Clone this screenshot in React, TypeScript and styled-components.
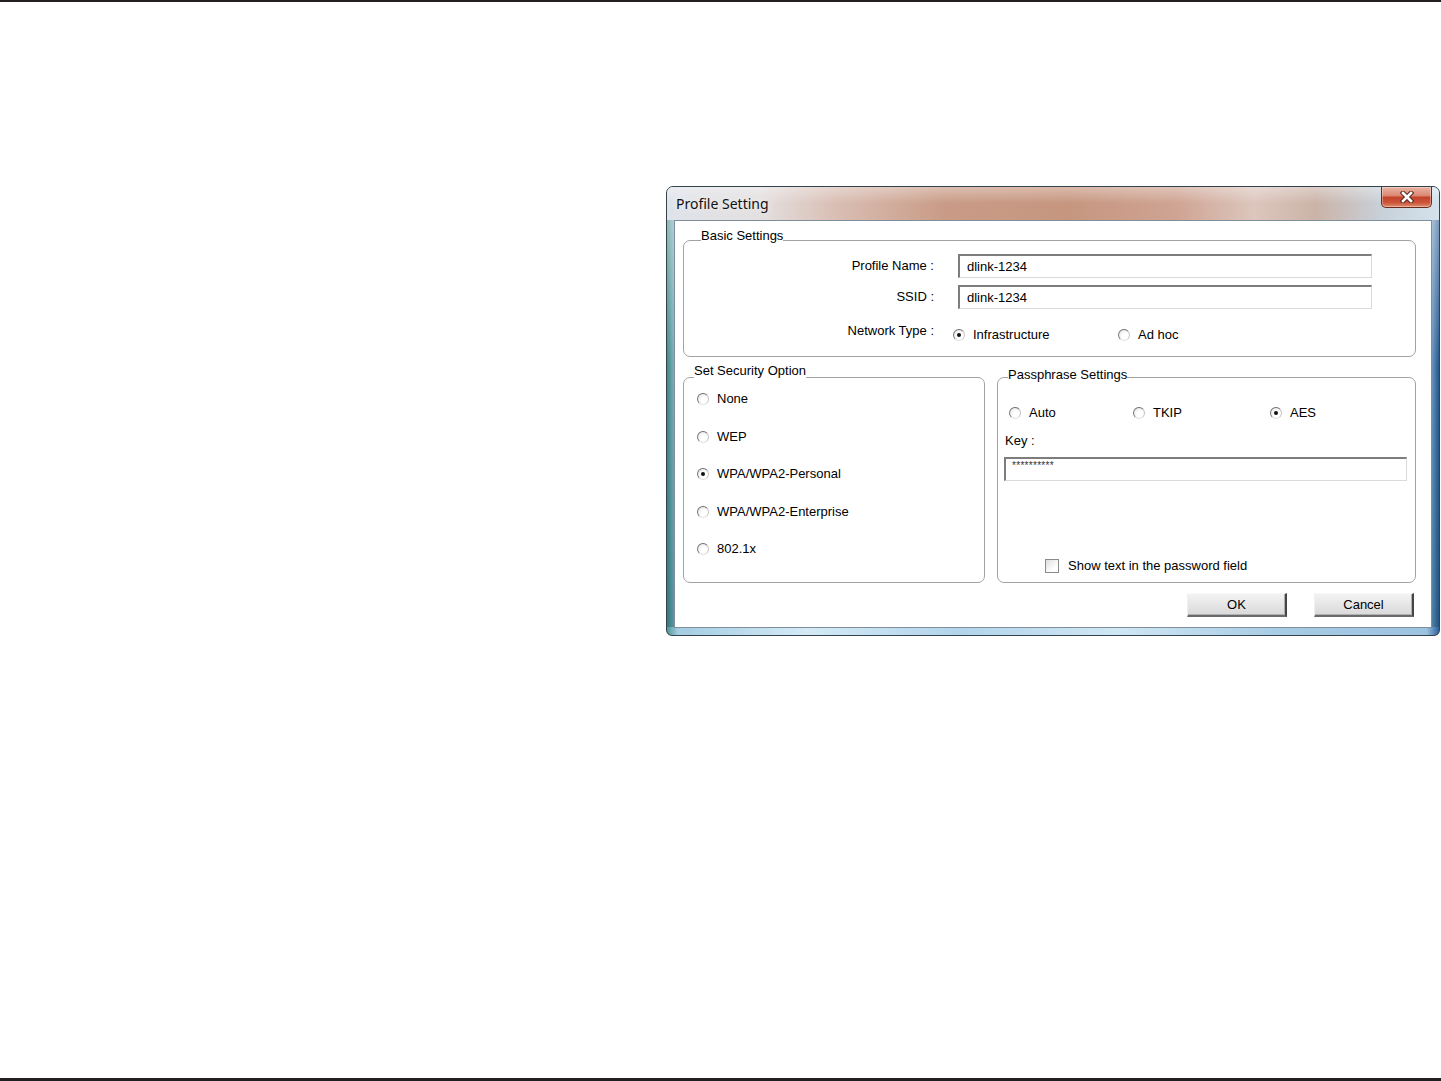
import { createGlobalStyle, styled } from "styled-components";

const GlobalStyle = createGlobalStyle`
  html, body {
    margin: 0;
    padding: 0;
    background: #fff;
  }
  body {
    font-family: "Liberation Sans", Arial, sans-serif;
    color: #000;
  }
`;

const Page = styled.div`
  box-sizing: border-box;
  width: 1441px;
  height: 1081px;
  border-top: 2px solid #231f20;
  border-bottom: 3px solid #231f20;
  padding: 184px 0 0 666px;
  background: #fff;
`;

const Window = styled.div`
  box-sizing: border-box;
  width: 774px;
  height: 450px;
  display: flex;
  flex-direction: column;
  border: 1px solid #34424c;
  border-radius: 7px 7px 6px 6px;
  overflow: hidden;
  background:
    linear-gradient(90deg, #4f9894 0%, #a3cde2 1.4%, #d4eaf6 18%, #b2d4ea 38%, #d0e7f4 58%, #a6cbe4 80%, #9cc3e0 98.4%, #2c5f9c 100%)
      bottom / 100% 8px no-repeat,
    linear-gradient(180deg, rgba(255, 255, 255, 0.5) 0%, rgba(255, 255, 255, 0) 40%, rgba(20, 80, 100, 0.3) 100%),
    linear-gradient(90deg, #3f8a86 0%, #8fbccb 1.2%, #bcd9e8 30%, #c9e2ef 55%, #90b8d8 98.6%, #24558e 100%);
`;

const TitleBar = styled.div`
  height: 33px;
  flex: none;
  display: flex;
  align-items: center;
  justify-content: space-between;
  padding-left: 9px;
  background:
    linear-gradient(180deg, rgba(255, 255, 255, 0.35) 0%, rgba(255, 255, 255, 0) 50%),
    linear-gradient(
      90deg,
      #dfe3ea 0%,
      #e4e0e0 12%,
      #d9beb3 22%,
      #c99b86 36%,
      #c6967f 52%,
      #cfa493 66%,
      #dcc6bd 76%,
      #cbb3a8 84%,
      #c8d2db 93%,
      #d4e2ec 100%
    );
`;

const Title = styled.span`
  font-family: "Noto Sans", "Liberation Sans", sans-serif;
  font-size: 14px;
  line-height: 20px;
  color: #111;
  text-shadow: 0 0 6px rgba(255, 255, 255, 0.95);
`;

const CloseButton = styled.button`
  align-self: flex-start;
  box-sizing: border-box;
  width: 51px;
  height: 21px;
  margin: 0 7px 0 0;
  padding: 0;
  display: flex;
  align-items: center;
  justify-content: center;
  border: 1px solid #6a2a1e;
  border-top: none;
  border-radius: 0 0 5px 5px;
  background: linear-gradient(180deg, #eab3a3 0%, #dc8a74 42%, #c4432b 52%, #cc553b 78%, #e08d6c 100%);
  box-shadow: inset 0 0 0 1px rgba(255, 255, 255, 0.35);
`;

const Client = styled.div`
  flex: 1;
  display: flex;
  flex-direction: column;
  margin: 0 7px 7px;
  padding: 5px 15px 10px 8px;
  border: 1px solid #7f8e9c;
  background: #fff;
  font-size: 13px;
`;

const Group = styled.fieldset<{ $width?: number }>`
  margin: 0;
  padding: 0;
  min-width: 0;
  border: 1px solid #a2a2a2;
  border-radius: 7px;
  ${(p) => (p.$width ? `width: ${p.$width}px; flex: none;` : "flex: 1;")}
  box-sizing: border-box;
`;

const Caption = styled.legend<{ $inset: number; $offset: number }>`
  margin-left: ${(p) => p.$inset}px;
  padding: ${(p) => p.$offset}px 0 ${(p) => 12 - p.$offset}px;
  font-size: 13px;
  line-height: 16px;
`;

const BasicBody = styled.div`
  display: flex;
  flex-direction: column;
  gap: 7px;
  padding-bottom: 9px;
`;

const FieldRow = styled.div<{ $top?: boolean }>`
  display: flex;
  align-items: ${(p) => (p.$top ? "flex-start" : "center")};
  gap: 24px;
  height: 24px;
  margin-top: ${(p) => (p.$top ? 7 : 0)}px;
`;

const FieldLabel = styled.span`
  flex: none;
  width: 250px;
  text-align: right;
  line-height: 16px;
`;

const TextBox = styled.input<{ $width: number }>`
  box-sizing: border-box;
  width: ${(p) => p.$width}px;
  height: 24px;
  margin: 0;
  padding: 0 6px 0 7px;
  border-style: solid;
  border-width: 2px 1px 1px 2px;
  border-color: #7d7d7d #dadada #dadada #7d7d7d;
  background: #fff;
  font-family: "Liberation Sans", Arial, sans-serif;
  font-size: 13px;
  color: #000;
  outline: none;
`;

const KeyBox = styled(TextBox)`
  padding: 0 0 9px 6px;
  font-size: 10px;
  letter-spacing: 0.3px;
  color: #333;
`;

const OptionLine = styled.div<{ $columns: string; $shift?: number; $drop?: number }>`
  display: grid;
  grid-template-columns: ${(p) => p.$columns};
  align-items: center;
  margin-left: ${(p) => p.$shift ?? 0}px;
  padding-top: ${(p) => p.$drop ?? 0}px;
`;

const Option = styled.label`
  display: flex;
  align-items: center;
  gap: 8px;
  line-height: 16px;
  white-space: nowrap;
`;

const RadioMark = styled.span<{ $checked?: boolean }>`
  position: relative;
  flex: none;
  box-sizing: border-box;
  width: 12px;
  height: 12px;
  border-radius: 50%;
  border: 1px solid;
  border-color: #6e6e6e #c4c4c4 #e2e2e2 #7a7a7a;
  background: radial-gradient(circle at 65% 65%, #ffffff 35%, #dedede 100%);
  &::after {
    content: "";
    display: ${(p) => (p.$checked ? "block" : "none")};
    position: absolute;
    left: 3px;
    top: 3px;
    width: 4px;
    height: 4px;
    border-radius: 50%;
    background: #111;
  }
`;

const CheckMark = styled.span`
  flex: none;
  box-sizing: border-box;
  width: 14px;
  height: 14px;
  border: 1px solid #8a8a8a;
  background: linear-gradient(135deg, #dedede 0%, #ffffff 70%);
`;

const LowerRow = styled.div`
  display: flex;
  gap: 12px;
  margin-top: 6px;
`;

const SecurityList = styled.div`
  display: flex;
  flex-direction: column;
  gap: 21.5px;
  padding-left: 13px;
`;

const PassBody = styled.div`
  display: flex;
  flex-direction: column;
  padding: 14px 8px 8px 6px;
`;

const KeyLabel = styled.span`
  margin: 12px 0 8px 1px;
  line-height: 16px;
`;

const ShowText = styled(Option)`
  gap: 9px;
  margin: 77px 0 0 41px;
`;

const ButtonRow = styled.div`
  display: flex;
  justify-content: flex-end;
  gap: 27px;
  margin-top: 10px;
  padding-right: 2px;
`;

const PushButton = styled.button`
  box-sizing: border-box;
  width: 100px;
  height: 24px;
  padding: 0;
  border-style: solid;
  border-width: 1px 2px 2px 1px;
  border-color: #f8f8f8 #454545 #6a6a6a #f0f0f0;
  background: linear-gradient(180deg, #f3f3f3 0%, #e6e6e6 50%, #d9d9d9 100%);
  box-shadow: inset -1px -1px 0 #b0b0b0;
  font-family: "Liberation Sans", Arial, sans-serif;
  font-size: 13px;
  color: #000;
`;

const CloseIcon = () => (
  <svg width="16" height="12" viewBox="0 0 16 12">
    <path d="M4 2 L12 10 M12 2 L4 10" stroke="#5b2a22" strokeWidth="4.6" strokeLinecap="square" />
    <path d="M4 2 L12 10 M12 2 L4 10" stroke="#ffffff" strokeWidth="2.6" strokeLinecap="square" />
  </svg>
);

const Radio = ({ label, checked }: { label: string; checked?: boolean }) => (
  <Option>
    <RadioMark $checked={checked} />
    {label}
  </Option>
);

const securityOptions = ["None", "WEP", "WPA/WPA2-Personal", "WPA/WPA2-Enterprise", "802.1x"];

export default function App() {
  return (
    <Page>
      <GlobalStyle />
      <Window>
        <TitleBar>
          <Title>Profile Setting</Title>
          <CloseButton aria-label="Close">
            <CloseIcon />
          </CloseButton>
        </TitleBar>
        <Client>
          <Group>
            <Caption $inset={17} $offset={2}>Basic Settings</Caption>
            <BasicBody>
              <FieldRow>
                <FieldLabel>Profile Name :</FieldLabel>
                <TextBox $width={414} value="dlink-1234" readOnly />
              </FieldRow>
              <FieldRow>
                <FieldLabel>SSID :</FieldLabel>
                <TextBox $width={414} value="dlink-1234" readOnly />
              </FieldRow>
              <FieldRow $top>
                <FieldLabel>Network Type :</FieldLabel>
                <OptionLine $columns="165px auto" $shift={-5} $drop={4}>
                  <Radio label="Infrastructure" checked />
                  <Radio label="Ad hoc" />
                </OptionLine>
              </FieldRow>
            </BasicBody>
          </Group>
          <LowerRow>
            <Group $width={302}>
              <Caption $inset={10} $offset={0}>Set Security Option</Caption>
              <SecurityList>
                {securityOptions.map((o) => (
                  <Radio key={o} label={o} checked={o === "WPA/WPA2-Personal"} />
                ))}
              </SecurityList>
            </Group>
            <Group>
              <Caption $inset={10} $offset={4}>Passphrase Settings</Caption>
              <PassBody>
                <OptionLine $columns="124px 137px auto" $shift={5}>
                  <Radio label="Auto" />
                  <Radio label="TKIP" />
                  <Radio label="AES" checked />
                </OptionLine>
                <KeyLabel>Key :</KeyLabel>
                <KeyBox $width={403} type="text" value="**********" readOnly />
                <ShowText>
                  <CheckMark />
                  Show text in the password field
                </ShowText>
              </PassBody>
            </Group>
          </LowerRow>
          <ButtonRow>
            <PushButton>OK</PushButton>
            <PushButton>Cancel</PushButton>
          </ButtonRow>
        </Client>
      </Window>
    </Page>
  );
}
